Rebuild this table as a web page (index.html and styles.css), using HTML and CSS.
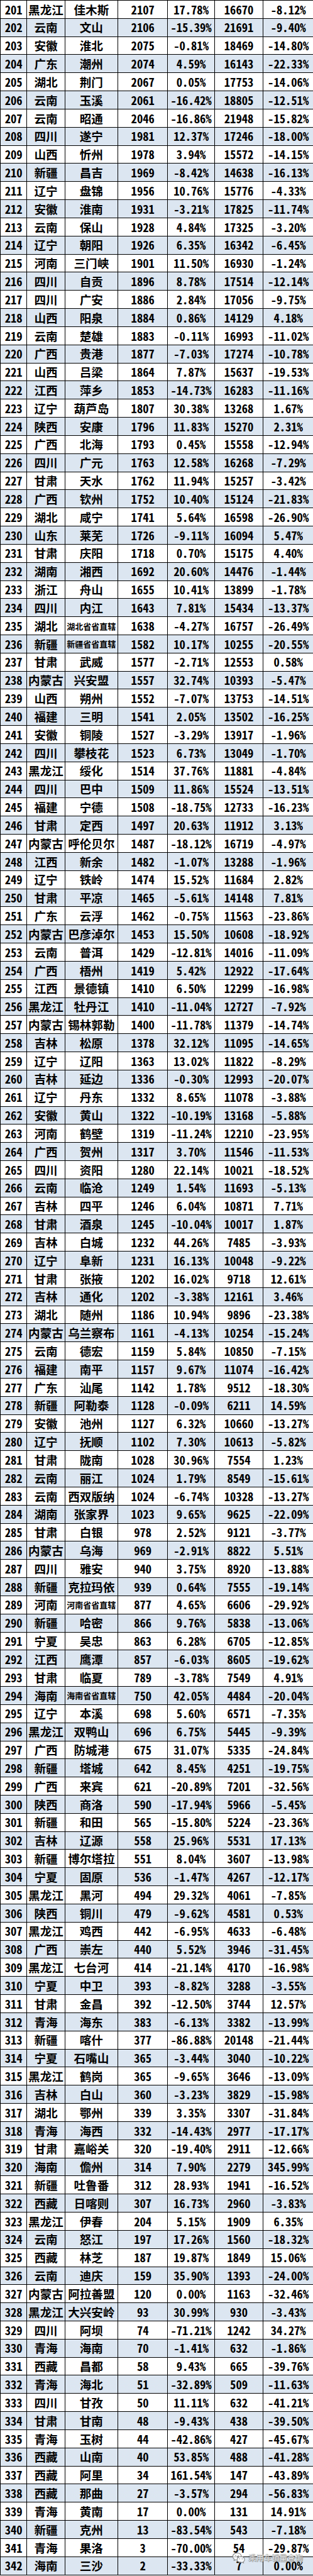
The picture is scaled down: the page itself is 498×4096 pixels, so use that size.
FILE: index.html
```html
<!DOCTYPE html>
<html lang="zh-CN">
<head>
<meta charset="utf-8">
<title>城市乘用车销量排名 201-342</title>
<link rel="stylesheet" href="styles.css">
</head>
<body>
<div class="sheet">
<div class="r"><span>201</span><span>黑龙江</span><span>佳木斯</span><span>2107</span><span>17.78%</span><span>16670</span><span>-8.12%</span></div>
<div class="r e"><span>202</span><span>云南</span><span>文山</span><span>2106</span><span>-15.39%</span><span>21691</span><span>-9.40%</span></div>
<div class="r"><span>203</span><span>安徽</span><span>淮北</span><span>2075</span><span>-0.81%</span><span>18469</span><span>-14.80%</span></div>
<div class="r e"><span>204</span><span>广东</span><span>潮州</span><span>2074</span><span>4.59%</span><span>16143</span><span>-22.33%</span></div>
<div class="r"><span>205</span><span>湖北</span><span>荆门</span><span>2067</span><span>0.05%</span><span>17753</span><span>-14.06%</span></div>
<div class="r e"><span>206</span><span>云南</span><span>玉溪</span><span>2061</span><span>-16.42%</span><span>18805</span><span>-12.51%</span></div>
<div class="r"><span>207</span><span>云南</span><span>昭通</span><span>2046</span><span>-16.86%</span><span>21948</span><span>-15.82%</span></div>
<div class="r e"><span>208</span><span>四川</span><span>遂宁</span><span>1981</span><span>12.37%</span><span>17246</span><span>-18.00%</span></div>
<div class="r"><span>209</span><span>山西</span><span>忻州</span><span>1978</span><span>3.94%</span><span>15572</span><span>-14.15%</span></div>
<div class="r e"><span>210</span><span>新疆</span><span>昌吉</span><span>1969</span><span>-8.42%</span><span>14638</span><span>-16.13%</span></div>
<div class="r"><span>211</span><span>辽宁</span><span>盘锦</span><span>1956</span><span>10.76%</span><span>15776</span><span>-4.33%</span></div>
<div class="r e"><span>212</span><span>安徽</span><span>淮南</span><span>1931</span><span>-3.21%</span><span>17825</span><span>-11.74%</span></div>
<div class="r"><span>213</span><span>云南</span><span>保山</span><span>1928</span><span>4.84%</span><span>17325</span><span>-3.20%</span></div>
<div class="r e"><span>214</span><span>辽宁</span><span>朝阳</span><span>1926</span><span>6.35%</span><span>16342</span><span>-6.45%</span></div>
<div class="r"><span>215</span><span>河南</span><span>三门峡</span><span>1901</span><span>11.50%</span><span>16930</span><span>-1.24%</span></div>
<div class="r e"><span>216</span><span>四川</span><span>自贡</span><span>1896</span><span>8.78%</span><span>17514</span><span>-12.14%</span></div>
<div class="r"><span>217</span><span>四川</span><span>广安</span><span>1886</span><span>2.84%</span><span>17056</span><span>-9.75%</span></div>
<div class="r e"><span>218</span><span>山西</span><span>阳泉</span><span>1884</span><span>0.86%</span><span>14129</span><span>4.18%</span></div>
<div class="r"><span>219</span><span>云南</span><span>楚雄</span><span>1883</span><span>-0.11%</span><span>16993</span><span>-11.02%</span></div>
<div class="r e"><span>220</span><span>广西</span><span>贵港</span><span>1877</span><span>-7.03%</span><span>17274</span><span>-10.78%</span></div>
<div class="r"><span>221</span><span>山西</span><span>吕梁</span><span>1864</span><span>7.87%</span><span>15637</span><span>-19.53%</span></div>
<div class="r e"><span>222</span><span>江西</span><span>萍乡</span><span>1853</span><span>-14.73%</span><span>16283</span><span>-11.16%</span></div>
<div class="r"><span>223</span><span>辽宁</span><span>葫芦岛</span><span>1807</span><span>30.38%</span><span>13268</span><span>1.67%</span></div>
<div class="r e"><span>224</span><span>陕西</span><span>安康</span><span>1796</span><span>11.83%</span><span>15270</span><span>2.31%</span></div>
<div class="r"><span>225</span><span>广西</span><span>北海</span><span>1793</span><span>0.45%</span><span>15558</span><span>-12.94%</span></div>
<div class="r e"><span>226</span><span>四川</span><span>广元</span><span>1763</span><span>12.58%</span><span>16268</span><span>-7.29%</span></div>
<div class="r"><span>227</span><span>甘肃</span><span>天水</span><span>1762</span><span>11.94%</span><span>15257</span><span>-3.42%</span></div>
<div class="r e"><span>228</span><span>广西</span><span>钦州</span><span>1752</span><span>10.40%</span><span>15124</span><span>-21.83%</span></div>
<div class="r"><span>229</span><span>湖北</span><span>咸宁</span><span>1741</span><span>5.64%</span><span>16598</span><span>-26.90%</span></div>
<div class="r e"><span>230</span><span>山东</span><span>莱芜</span><span>1726</span><span>-9.11%</span><span>16094</span><span>5.47%</span></div>
<div class="r"><span>231</span><span>甘肃</span><span>庆阳</span><span>1718</span><span>0.70%</span><span>15175</span><span>4.40%</span></div>
<div class="r e"><span>232</span><span>湖南</span><span>湘西</span><span>1692</span><span>20.60%</span><span>14476</span><span>-1.44%</span></div>
<div class="r"><span>233</span><span>浙江</span><span>舟山</span><span>1655</span><span>10.41%</span><span>13899</span><span>-1.78%</span></div>
<div class="r e"><span>234</span><span>四川</span><span>内江</span><span>1643</span><span>7.81%</span><span>15434</span><span>-13.37%</span></div>
<div class="r"><span>235</span><span>湖北</span><span class="s">湖北省省直辖</span><span>1638</span><span>-4.27%</span><span>16757</span><span>-26.49%</span></div>
<div class="r e"><span>236</span><span>新疆</span><span class="s">新疆省省直辖</span><span>1582</span><span>10.17%</span><span>10255</span><span>-20.55%</span></div>
<div class="r"><span>237</span><span>甘肃</span><span>武威</span><span>1577</span><span>-2.71%</span><span>12553</span><span>0.58%</span></div>
<div class="r e"><span>238</span><span>内蒙古</span><span>兴安盟</span><span>1557</span><span>32.74%</span><span>10393</span><span>-5.47%</span></div>
<div class="r"><span>239</span><span>山西</span><span>朔州</span><span>1552</span><span>-7.07%</span><span>13753</span><span>-14.51%</span></div>
<div class="r e"><span>240</span><span>福建</span><span>三明</span><span>1541</span><span>2.05%</span><span>13502</span><span>-16.25%</span></div>
<div class="r"><span>241</span><span>安徽</span><span>铜陵</span><span>1527</span><span>-3.29%</span><span>13917</span><span>-1.96%</span></div>
<div class="r e"><span>242</span><span>四川</span><span>攀枝花</span><span>1523</span><span>6.73%</span><span>13049</span><span>-1.70%</span></div>
<div class="r"><span>243</span><span>黑龙江</span><span>绥化</span><span>1514</span><span>37.76%</span><span>11881</span><span>-4.84%</span></div>
<div class="r e"><span>244</span><span>四川</span><span>巴中</span><span>1509</span><span>11.86%</span><span>15524</span><span>-13.51%</span></div>
<div class="r"><span>245</span><span>福建</span><span>宁德</span><span>1508</span><span>-18.75%</span><span>12733</span><span>-16.23%</span></div>
<div class="r e"><span>246</span><span>甘肃</span><span>定西</span><span>1497</span><span>20.63%</span><span>11912</span><span>3.13%</span></div>
<div class="r"><span>247</span><span>内蒙古</span><span>呼伦贝尔</span><span>1487</span><span>-18.12%</span><span>16719</span><span>-4.97%</span></div>
<div class="r e"><span>248</span><span>江西</span><span>新余</span><span>1482</span><span>-1.07%</span><span>13288</span><span>-1.96%</span></div>
<div class="r"><span>249</span><span>辽宁</span><span>铁岭</span><span>1474</span><span>15.52%</span><span>11684</span><span>2.82%</span></div>
<div class="r e"><span>250</span><span>甘肃</span><span>平凉</span><span>1465</span><span>-5.61%</span><span>14148</span><span>7.81%</span></div>
<div class="r"><span>251</span><span>广东</span><span>云浮</span><span>1462</span><span>-0.75%</span><span>11563</span><span>-23.86%</span></div>
<div class="r e"><span>252</span><span>内蒙古</span><span>巴彦淖尔</span><span>1453</span><span>15.50%</span><span>10608</span><span>-18.92%</span></div>
<div class="r"><span>253</span><span>云南</span><span>普洱</span><span>1429</span><span>-12.81%</span><span>14016</span><span>-11.09%</span></div>
<div class="r e"><span>254</span><span>广西</span><span>梧州</span><span>1419</span><span>5.42%</span><span>12922</span><span>-17.64%</span></div>
<div class="r"><span>255</span><span>江西</span><span>景德镇</span><span>1410</span><span>6.50%</span><span>12299</span><span>-16.98%</span></div>
<div class="r e"><span>256</span><span>黑龙江</span><span>牡丹江</span><span>1410</span><span>-11.04%</span><span>12727</span><span>-7.92%</span></div>
<div class="r"><span>257</span><span>内蒙古</span><span>锡林郭勒</span><span>1400</span><span>-11.78%</span><span>11379</span><span>-14.74%</span></div>
<div class="r e"><span>258</span><span>吉林</span><span>松原</span><span>1378</span><span>32.12%</span><span>11095</span><span>-14.65%</span></div>
<div class="r"><span>259</span><span>辽宁</span><span>辽阳</span><span>1363</span><span>13.02%</span><span>11822</span><span>-8.29%</span></div>
<div class="r e"><span>260</span><span>吉林</span><span>延边</span><span>1336</span><span>-0.30%</span><span>12993</span><span>-20.07%</span></div>
<div class="r"><span>261</span><span>辽宁</span><span>丹东</span><span>1332</span><span>8.65%</span><span>11078</span><span>-3.88%</span></div>
<div class="r e"><span>262</span><span>安徽</span><span>黄山</span><span>1322</span><span>-10.19%</span><span>13168</span><span>-5.88%</span></div>
<div class="r"><span>263</span><span>河南</span><span>鹤壁</span><span>1319</span><span>-11.24%</span><span>12210</span><span>-23.95%</span></div>
<div class="r e"><span>264</span><span>广西</span><span>贺州</span><span>1317</span><span>3.70%</span><span>11546</span><span>-11.53%</span></div>
<div class="r"><span>265</span><span>四川</span><span>资阳</span><span>1280</span><span>22.14%</span><span>10021</span><span>-18.52%</span></div>
<div class="r e"><span>266</span><span>云南</span><span>临沧</span><span>1249</span><span>1.54%</span><span>11693</span><span>-5.13%</span></div>
<div class="r"><span>267</span><span>吉林</span><span>四平</span><span>1246</span><span>6.04%</span><span>10871</span><span>7.71%</span></div>
<div class="r e"><span>268</span><span>甘肃</span><span>酒泉</span><span>1245</span><span>-10.04%</span><span>10017</span><span>1.87%</span></div>
<div class="r"><span>269</span><span>吉林</span><span>白城</span><span>1232</span><span>44.26%</span><span>7485</span><span>-3.93%</span></div>
<div class="r e"><span>270</span><span>辽宁</span><span>阜新</span><span>1231</span><span>16.13%</span><span>10048</span><span>-9.22%</span></div>
<div class="r"><span>271</span><span>甘肃</span><span>张掖</span><span>1202</span><span>16.02%</span><span>9718</span><span>12.61%</span></div>
<div class="r e"><span>272</span><span>吉林</span><span>通化</span><span>1202</span><span>-3.38%</span><span>12161</span><span>3.46%</span></div>
<div class="r"><span>273</span><span>湖北</span><span>随州</span><span>1186</span><span>10.94%</span><span>9896</span><span>-23.38%</span></div>
<div class="r e"><span>274</span><span>内蒙古</span><span>乌兰察布</span><span>1161</span><span>-4.13%</span><span>10254</span><span>-15.24%</span></div>
<div class="r"><span>275</span><span>云南</span><span>德宏</span><span>1159</span><span>5.84%</span><span>10850</span><span>-7.15%</span></div>
<div class="r e"><span>276</span><span>福建</span><span>南平</span><span>1157</span><span>9.67%</span><span>11074</span><span>-16.42%</span></div>
<div class="r"><span>277</span><span>广东</span><span>汕尾</span><span>1142</span><span>1.78%</span><span>9512</span><span>-18.30%</span></div>
<div class="r e"><span>278</span><span>新疆</span><span>阿勒泰</span><span>1128</span><span>-0.09%</span><span>6211</span><span>14.59%</span></div>
<div class="r"><span>279</span><span>安徽</span><span>池州</span><span>1127</span><span>6.32%</span><span>10660</span><span>-13.27%</span></div>
<div class="r e"><span>280</span><span>辽宁</span><span>抚顺</span><span>1102</span><span>7.30%</span><span>10613</span><span>-5.82%</span></div>
<div class="r"><span>281</span><span>甘肃</span><span>陇南</span><span>1028</span><span>30.96%</span><span>7554</span><span>1.23%</span></div>
<div class="r e"><span>282</span><span>云南</span><span>丽江</span><span>1024</span><span>1.79%</span><span>8549</span><span>-15.61%</span></div>
<div class="r"><span>283</span><span>云南</span><span>西双版纳</span><span>1024</span><span>-6.74%</span><span>10328</span><span>-13.27%</span></div>
<div class="r e"><span>284</span><span>湖南</span><span>张家界</span><span>1023</span><span>9.65%</span><span>9625</span><span>-22.09%</span></div>
<div class="r"><span>285</span><span>甘肃</span><span>白银</span><span>978</span><span>2.52%</span><span>9121</span><span>-3.77%</span></div>
<div class="r e"><span>286</span><span>内蒙古</span><span>乌海</span><span>969</span><span>-2.91%</span><span>8822</span><span>5.51%</span></div>
<div class="r"><span>287</span><span>四川</span><span>雅安</span><span>940</span><span>3.75%</span><span>8920</span><span>-13.88%</span></div>
<div class="r e"><span>288</span><span>新疆</span><span>克拉玛依</span><span>939</span><span>0.64%</span><span>7555</span><span>-19.14%</span></div>
<div class="r"><span>289</span><span>河南</span><span class="s">河南省省直辖</span><span>877</span><span>4.65%</span><span>6606</span><span>-29.92%</span></div>
<div class="r e"><span>290</span><span>新疆</span><span>哈密</span><span>866</span><span>9.76%</span><span>5838</span><span>-13.06%</span></div>
<div class="r"><span>291</span><span>宁夏</span><span>吴忠</span><span>863</span><span>6.28%</span><span>6705</span><span>-12.85%</span></div>
<div class="r e"><span>292</span><span>江西</span><span>鹰潭</span><span>857</span><span>-6.03%</span><span>8605</span><span>-19.62%</span></div>
<div class="r"><span>293</span><span>甘肃</span><span>临夏</span><span>789</span><span>-3.78%</span><span>7549</span><span>4.91%</span></div>
<div class="r e"><span>294</span><span>海南</span><span class="s">海南省省直辖</span><span>750</span><span>42.05%</span><span>4484</span><span>-20.04%</span></div>
<div class="r"><span>295</span><span>辽宁</span><span>本溪</span><span>698</span><span>5.60%</span><span>6571</span><span>-7.35%</span></div>
<div class="r e"><span>296</span><span>黑龙江</span><span>双鸭山</span><span>696</span><span>6.75%</span><span>5445</span><span>-9.39%</span></div>
<div class="r"><span>297</span><span>广西</span><span>防城港</span><span>675</span><span>31.07%</span><span>5335</span><span>-24.84%</span></div>
<div class="r e"><span>298</span><span>新疆</span><span>塔城</span><span>642</span><span>8.45%</span><span>4251</span><span>-19.75%</span></div>
<div class="r"><span>299</span><span>广西</span><span>来宾</span><span>621</span><span>-20.89%</span><span>7201</span><span>-32.56%</span></div>
<div class="r e"><span>300</span><span>陕西</span><span>商洛</span><span>590</span><span>-17.94%</span><span>5966</span><span>-5.45%</span></div>
<div class="r"><span>301</span><span>新疆</span><span>和田</span><span>565</span><span>-15.80%</span><span>5224</span><span>-23.36%</span></div>
<div class="r e"><span>302</span><span>吉林</span><span>辽源</span><span>558</span><span>25.96%</span><span>5531</span><span>17.13%</span></div>
<div class="r"><span>303</span><span>新疆</span><span>博尔塔拉</span><span>551</span><span>8.04%</span><span>3607</span><span>-13.98%</span></div>
<div class="r e"><span>304</span><span>宁夏</span><span>固原</span><span>536</span><span>-1.47%</span><span>4267</span><span>-12.17%</span></div>
<div class="r"><span>305</span><span>黑龙江</span><span>黑河</span><span>494</span><span>29.32%</span><span>4061</span><span>-7.85%</span></div>
<div class="r e"><span>306</span><span>陕西</span><span>铜川</span><span>479</span><span>-9.62%</span><span>4581</span><span>0.53%</span></div>
<div class="r"><span>307</span><span>黑龙江</span><span>鸡西</span><span>442</span><span>-6.95%</span><span>4633</span><span>-6.48%</span></div>
<div class="r e"><span>308</span><span>广西</span><span>崇左</span><span>440</span><span>5.52%</span><span>3946</span><span>-31.45%</span></div>
<div class="r"><span>309</span><span>黑龙江</span><span>七台河</span><span>414</span><span>-21.14%</span><span>4170</span><span>-16.98%</span></div>
<div class="r e"><span>310</span><span>宁夏</span><span>中卫</span><span>393</span><span>-8.82%</span><span>3288</span><span>-3.55%</span></div>
<div class="r"><span>311</span><span>甘肃</span><span>金昌</span><span>392</span><span>-12.50%</span><span>3744</span><span>12.57%</span></div>
<div class="r e"><span>312</span><span>青海</span><span>海东</span><span>383</span><span>-6.13%</span><span>3382</span><span>-13.99%</span></div>
<div class="r"><span>313</span><span>新疆</span><span>喀什</span><span>377</span><span>-86.88%</span><span>20148</span><span>-21.44%</span></div>
<div class="r e"><span>314</span><span>宁夏</span><span>石嘴山</span><span>365</span><span>-3.44%</span><span>3040</span><span>-10.22%</span></div>
<div class="r"><span>315</span><span>黑龙江</span><span>鹤岗</span><span>365</span><span>-9.65%</span><span>3646</span><span>-13.09%</span></div>
<div class="r e"><span>316</span><span>吉林</span><span>白山</span><span>360</span><span>-3.23%</span><span>3829</span><span>-15.98%</span></div>
<div class="r"><span>317</span><span>湖北</span><span>鄂州</span><span>339</span><span>3.35%</span><span>3307</span><span>-31.84%</span></div>
<div class="r e"><span>318</span><span>青海</span><span>海西</span><span>332</span><span>-14.43%</span><span>2977</span><span>-17.17%</span></div>
<div class="r"><span>319</span><span>甘肃</span><span>嘉峪关</span><span>320</span><span>-19.40%</span><span>2911</span><span>-12.66%</span></div>
<div class="r e"><span>320</span><span>海南</span><span>儋州</span><span>314</span><span>7.90%</span><span>2279</span><span>345.99%</span></div>
<div class="r"><span>321</span><span>新疆</span><span>吐鲁番</span><span>312</span><span>28.93%</span><span>1941</span><span>-16.52%</span></div>
<div class="r e"><span>322</span><span>西藏</span><span>日喀则</span><span>307</span><span>16.73%</span><span>2960</span><span>-3.83%</span></div>
<div class="r"><span>323</span><span>黑龙江</span><span>伊春</span><span>204</span><span>5.15%</span><span>1909</span><span>6.35%</span></div>
<div class="r e"><span>324</span><span>云南</span><span>怒江</span><span>197</span><span>17.26%</span><span>1560</span><span>-18.32%</span></div>
<div class="r"><span>325</span><span>西藏</span><span>林芝</span><span>187</span><span>19.87%</span><span>1849</span><span>15.06%</span></div>
<div class="r e"><span>326</span><span>云南</span><span>迪庆</span><span>159</span><span>35.90%</span><span>1393</span><span>-24.00%</span></div>
<div class="r"><span>327</span><span>内蒙古</span><span>阿拉善盟</span><span>120</span><span>0.00%</span><span>1163</span><span>-32.46%</span></div>
<div class="r e"><span>328</span><span>黑龙江</span><span>大兴安岭</span><span>93</span><span>30.99%</span><span>930</span><span>-3.43%</span></div>
<div class="r"><span>329</span><span>四川</span><span>阿坝</span><span>74</span><span>-71.21%</span><span>1242</span><span>34.27%</span></div>
<div class="r e"><span>330</span><span>青海</span><span>海南</span><span>70</span><span>-1.41%</span><span>632</span><span>-1.86%</span></div>
<div class="r"><span>331</span><span>西藏</span><span>昌都</span><span>58</span><span>9.43%</span><span>665</span><span>-39.76%</span></div>
<div class="r e"><span>332</span><span>青海</span><span>海北</span><span>51</span><span>-32.89%</span><span>509</span><span>-11.63%</span></div>
<div class="r"><span>333</span><span>四川</span><span>甘孜</span><span>50</span><span>11.11%</span><span>632</span><span>-41.21%</span></div>
<div class="r e"><span>334</span><span>甘肃</span><span>甘南</span><span>48</span><span>-9.43%</span><span>438</span><span>-39.50%</span></div>
<div class="r"><span>335</span><span>青海</span><span>玉树</span><span>44</span><span>-42.86%</span><span>427</span><span>-45.67%</span></div>
<div class="r e"><span>336</span><span>西藏</span><span>山南</span><span>40</span><span>53.85%</span><span>488</span><span>-41.28%</span></div>
<div class="r"><span>337</span><span>西藏</span><span>阿里</span><span>34</span><span>161.54%</span><span>147</span><span>-43.89%</span></div>
<div class="r e"><span>338</span><span>西藏</span><span>那曲</span><span>27</span><span>-3.57%</span><span>294</span><span>-56.83%</span></div>
<div class="r"><span>339</span><span>青海</span><span>黄南</span><span>17</span><span>0.00%</span><span>131</span><span>14.91%</span></div>
<div class="r e"><span>340</span><span>新疆</span><span>克州</span><span>13</span><span>-83.54%</span><span>543</span><span>-7.18%</span></div>
<div class="r"><span>341</span><span>青海</span><span>果洛</span><span>3</span><span>-70.00%</span><span>54</span><span>-29.87%</span></div>
<div class="r e"><span>342</span><span>海南</span><span>三沙</span><span>2</span><span>-33.33%</span><span>7</span><span>0.00%</span></div>
</div>
<div class="watermark">
<svg class="wm-icon" viewBox="0 0 24 20" width="22" height="18" aria-hidden="true">
<path d="M9 1.5C4.6 1.5 1.2 4.3 1.2 7.8c0 2 1.1 3.7 2.8 4.9l-0.7 2.2 2.6-1.3c1 0.3 2 0.5 3.1 0.5" fill="rgba(255,255,255,0.7)" stroke="#8a8a8a" stroke-width="1.2" stroke-linejoin="round"/>
<path d="M16.8 7.8c-0.6-3.6-3.8-6.3-7.8-6.3" fill="none" stroke="#8a8a8a" stroke-width="1.2"/>
<ellipse cx="15.6" cy="13.2" rx="6.6" ry="5.4" fill="rgba(255,255,255,0.7)" stroke="#8a8a8a" stroke-width="1.2"/>
<path d="M19.6 17.6l1.2 1.8-2.6-1" fill="none" stroke="#8a8a8a" stroke-width="1.1" stroke-linejoin="round"/>
<circle cx="6.4" cy="6.2" r="0.9" fill="#8a8a8a"/>
<circle cx="11" cy="6.2" r="0.9" fill="#8a8a8a"/>
<circle cx="13.3" cy="12" r="0.8" fill="#8a8a8a"/>
<circle cx="17.9" cy="12" r="0.8" fill="#8a8a8a"/>
</svg>
<span class="wm-text">乘用车销量查询</span>
</div>
</body>
</html>
```
FILE: styles.css
```css
* {
  box-sizing: border-box;
}

html, body {
  margin: 0;
  padding: 0;
  background: #ffffff;
}

body {
  position: relative;
  width: 498px;
  font-family: "Noto Sans CJK SC", "Noto Sans", sans-serif;
  font-weight: 700;
  color: #000000;
}

.sheet {
  display: grid;
  grid-template-columns: 42.3px 60.4px 84.3px 79.4px 74.4px 77.6px 79.6px;
  grid-auto-rows: 28.84px;
  width: 498px;
  border-top: 1px solid #000;
  border-left: 1px solid #000;
}

.r {
  display: contents;
}

.r > span {
  display: flex;
  align-items: center;
  justify-content: center;
  border-right: 1px solid #000;
  border-bottom: 1px solid #000;
  background: #ffffff;
  font-size: 18.6px;
  line-height: 1;
  white-space: nowrap;
  overflow: hidden;
  font-feature-settings: "hwid" 1;
  letter-spacing: 0;
}

.r.e > span {
  background: #dce6f1;
}

.r > span.s {
  font-size: 13px;
}

.watermark {
  position: absolute;
  left: 369px;
  top: 4058px;
  display: flex;
  align-items: center;
  gap: 4px;
  pointer-events: none;
}

.wm-icon {
  display: block;
}

.wm-text {
  font-size: 12.4px;
  font-weight: 400;
  line-height: 1;
  color: rgba(255, 255, 255, 0.9);
  text-shadow: 0 0 1px #6f6f6f, 0 0 1px #6f6f6f, 1px 1px 1px rgba(80, 80, 80, 0.6);
}
```
